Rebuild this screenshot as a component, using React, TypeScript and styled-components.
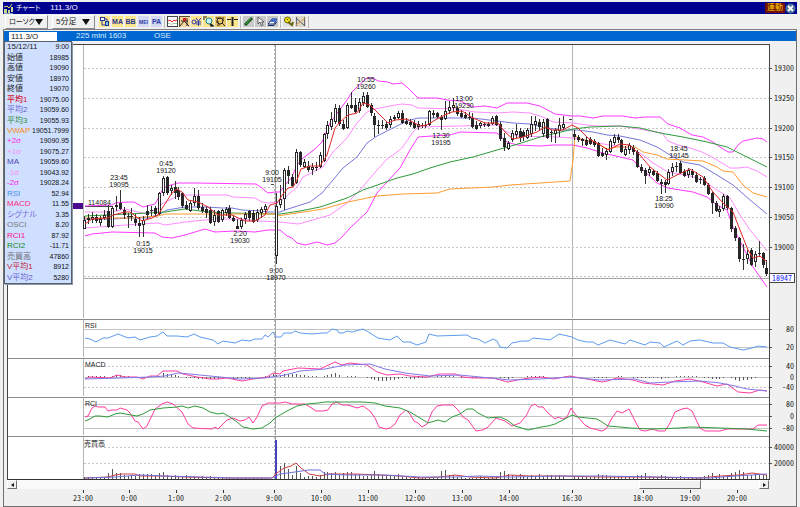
import React from "react";
import styled, { createGlobalStyle } from "styled-components";

const GlobalStyle = createGlobalStyle`
  * { box-sizing: border-box; }
  body {
    margin: 0;
    background: #f0f0f0;
    font-family: "Liberation Sans", "Noto Sans CJK JP", sans-serif;
    font-size: 8px;
    line-height: 10px;
    color: #222;
  }
  button, input, select { font: inherit; color: inherit; margin: 0; }
`;

/* ---------- chart data ---------- */

type Candle = [high: number, top: number, bottom: number, low: number, up: 0 | 1];

const candles: Record<number, Candle> = {
  0: [216, 220, 229, 229, 1], 1: [214, 218, 220, 224, 1], 2: [212, 217, 220, 223, 1],
  3: [214, 217, 221, 223, 0], 4: [216, 219, 223, 226, 1], 5: [210, 215, 218, 220, 1],
  6: [205, 211, 227, 228, 0], 7: [206, 208, 227, 228, 1], 8: [196, 205, 207, 211, 1],
  9: [190, 203, 209, 210, 0], 10: [207, 210, 215, 219, 0], 11: [213, 216, 217, 228, 0],
  12: [208, 216, 217, 221, 0], 13: [214, 219, 223, 226, 0], 14: [217, 223, 226, 237, 0],
  15: [216, 220, 225, 237, 1], 16: [205, 211, 215, 219, 0], 17: [206, 210, 211, 216, 1],
  18: [206, 208, 214, 217, 0], 19: [192, 193, 214, 215, 1], 20: [176, 178, 193, 196, 1],
  21: [176, 177, 193, 195, 0], 22: [185, 188, 191, 195, 1], 23: [181, 187, 193, 199, 0],
  24: [187, 190, 197, 200, 0], 25: [192, 193, 206, 208, 0], 26: [201, 205, 209, 210, 0],
  27: [200, 203, 211, 212, 1], 28: [188, 196, 203, 206, 1], 29: [190, 196, 208, 210, 0],
  30: [203, 207, 211, 213, 0], 31: [207, 209, 213, 218, 0], 32: [207, 210, 223, 224, 0],
  33: [210, 215, 222, 226, 1], 34: [210, 211, 222, 223, 0], 35: [209, 210, 220, 222, 1],
  36: [207, 209, 213, 216, 1], 37: [205, 208, 218, 219, 0], 38: [215, 218, 221, 222, 0],
  39: [219, 226, 229, 229, 0], 40: [218, 220, 227, 229, 1], 41: [212, 214, 219, 224, 1],
  42: [210, 211, 218, 221, 0], 43: [210, 213, 222, 223, 0], 44: [209, 212, 220, 222, 1],
  45: [207, 209, 213, 218, 1], 46: [204, 206, 210, 214, 1],
  49: [193, 206, 256, 264, 1], 50: [185, 199, 205, 208, 1], 51: [168, 170, 199, 210, 1],
  52: [166, 170, 176, 184, 0], 53: [174, 177, 186, 187, 0], 54: [149, 152, 183, 184, 1],
  55: [151, 152, 165, 167, 0], 56: [159, 162, 167, 168, 1], 57: [161, 166, 170, 172, 0],
  58: [163, 167, 170, 175, 1], 59: [162, 167, 168, 171, 0], 60: [152, 155, 167, 168, 1],
  61: [133, 134, 161, 162, 1], 62: [121, 125, 134, 139, 1], 63: [112, 119, 127, 130, 1],
  64: [104, 108, 122, 124, 1], 65: [105, 108, 124, 126, 0], 66: [120, 124, 129, 130, 0],
  67: [103, 105, 128, 129, 1], 68: [92, 105, 108, 109, 0], 69: [98, 105, 112, 113, 0],
  70: [98, 102, 111, 113, 1], 71: [92, 96, 103, 106, 1], 72: [92, 95, 107, 108, 0],
  73: [103, 105, 113, 116, 0], 74: [113, 116, 125, 137, 0], 75: [120, 125, 126, 134, 0],
  76: [120, 125, 126, 129, 0], 77: [121, 124, 128, 130, 0], 78: [116, 119, 125, 128, 1],
  79: [115, 117, 119, 121, 1], 80: [111, 113, 118, 119, 1], 81: [110, 113, 123, 124, 0],
  82: [118, 121, 124, 125, 0], 83: [119, 122, 125, 127, 0], 84: [120, 123, 128, 129, 0],
  85: [121, 124, 127, 130, 1], 86: [123, 125, 126, 128, 0], 87: [121, 125, 126, 128, 0],
  88: [110, 111, 125, 126, 1], 89: [110, 113, 115, 118, 0], 90: [112, 113, 117, 119, 0],
  91: [115, 117, 120, 130, 0], 92: [101, 111, 119, 120, 1], 93: [101, 107, 111, 114, 1],
  94: [98, 105, 108, 112, 1], 95: [106, 108, 114, 116, 0], 96: [110, 113, 117, 118, 0],
  97: [112, 115, 118, 119, 0], 98: [112, 117, 118, 120, 0], 99: [113, 118, 127, 128, 0],
  100: [121, 125, 129, 130, 0], 101: [122, 123, 126, 128, 1], 102: [122, 124, 125, 127, 0],
  103: [122, 124, 126, 127, 1], 104: [116, 118, 124, 125, 1], 105: [115, 116, 125, 126, 0],
  106: [122, 124, 139, 141, 0], 107: [133, 138, 147, 151, 0], 108: [141, 143, 149, 150, 1],
  109: [130, 133, 140, 142, 1], 110: [124, 131, 135, 138, 1], 111: [128, 131, 138, 142, 0],
  112: [130, 132, 137, 141, 0], 113: [128, 130, 138, 139, 1], 114: [116, 124, 134, 137, 1],
  115: [116, 121, 125, 131, 1], 116: [119, 122, 127, 131, 0], 117: [119, 122, 134, 137, 1],
  118: [118, 119, 138, 139, 0], 119: [130, 132, 133, 142, 0], 120: [128, 130, 134, 143, 1],
  121: [118, 125, 131, 137, 1], 122: [116, 124, 128, 130, 1],
  125: [130, 134, 137, 140, 0], 126: [135, 137, 140, 142, 0], 127: [138, 139, 141, 146, 0],
  128: [137, 140, 145, 146, 0], 129: [137, 139, 144, 145, 0], 130: [139, 141, 145, 147, 0],
  131: [142, 143, 156, 157, 0], 132: [148, 153, 156, 157, 0], 133: [148, 151, 155, 160, 1],
  134: [139, 141, 152, 153, 1], 135: [134, 137, 143, 145, 1], 136: [134, 137, 140, 143, 0],
  137: [139, 140, 152, 153, 0], 138: [146, 149, 155, 156, 1], 139: [143, 145, 150, 154, 1],
  140: [145, 148, 152, 155, 0], 141: [150, 152, 167, 168, 0], 142: [164, 167, 171, 173, 0],
  143: [168, 170, 176, 184, 0], 144: [167, 169, 173, 176, 1], 145: [169, 171, 175, 176, 0],
  146: [171, 173, 181, 182, 0], 147: [179, 182, 184, 194, 0], 148: [180, 182, 185, 193, 0],
  149: [169, 172, 184, 185, 1], 150: [163, 167, 172, 176, 1], 151: [162, 166, 167, 172, 1],
  152: [161, 163, 173, 174, 0], 153: [169, 171, 176, 177, 0], 154: [168, 170, 175, 178, 1],
  155: [169, 171, 175, 178, 0], 156: [172, 175, 182, 183, 0], 157: [177, 179, 180, 184, 0],
  158: [176, 178, 185, 186, 0], 159: [183, 185, 194, 195, 0], 160: [192, 193, 203, 214, 0],
  161: [201, 203, 211, 212, 0], 162: [206, 209, 212, 217, 1], 163: [194, 196, 209, 211, 1],
  164: [195, 196, 208, 210, 0], 165: [207, 208, 229, 232, 0], 166: [226, 228, 238, 241, 0],
  167: [237, 238, 259, 262, 0], 168: [244, 259, 260, 270, 0], 169: [250, 254, 259, 264, 1],
  170: [248, 250, 265, 266, 0], 171: [251, 254, 262, 267, 1], 172: [241, 253, 254, 257, 1],
  173: [252, 253, 265, 268, 0], 174: [260, 268, 274, 276, 0],
};

const BAR_COUNT = 175;
const barX = (i: number) => Math.round(84.4 + 3.92 * i);

const overlays: { color: string; points: string }[] = [
  { color: "#ff8cff", points: "85,212 112,212 125,209 147,214 158,208 163,203 172,199 178,195 227,195 233,197 255,198 262,202 268,203 280,202 290,193 297,187 303,177 323,167 333,152 347,138 357,123 367,112 375,109 390,106 402,104 412,105 418,108 457,109 475,112 497,113 513,112 530,113 543,117 553,122 573,123 587,125 597,126 620,126 633,128 650,131 662,133 668,141 678,145 690,148 702,152 712,157 722,163 730,168 738,168 747,167 757,171 767,177" },
  { color: "#ff8cff", points: "85,228 112,226 140,224 158,223 165,225 185,222 215,219 240,219 260,221 280,222 298,224 313,220 330,215 347,203 360,190 377,170 387,159 393,155 402,148 413,132 418,127 460,126 497,125 505,131 517,136 557,137 573,138 597,143 630,148 640,153 653,163 668,172 690,176 703,180 717,190 730,198 740,215 750,230 760,242 767,251" },
  { color: "#ff38ff", points: "85,206 112,205 115,203 128,202 134,202 143,207 155,204 159,197 163,188 171,185 178,183 195,183 256,184 262,188 268,193 275,192 280,192 285,185 292,177 297,165 303,158 315,149 322,142 330,123 338,112 347,100 352,92 357,87 367,78 373,78 378,81 388,82 393,84 402,83 408,88 418,98 437,98 447,100 460,101 473,107 485,106 497,108 507,103 527,103 540,106 555,114 572,116 580,116 593,118 603,116 623,116 635,118 645,117 660,117 668,124 680,128 692,135 703,137 713,142 720,147 728,152 733,152 738,145 743,141 757,138 763,139 767,142" },
  { color: "#ff38ff", points: "85,236 92,234 112,232 155,233 162,237 172,238 185,235 205,229 215,232 235,231 255,232 268,230 280,230 287,236 292,238 297,243 305,245 317,242 327,245 335,243 342,237 350,228 367,212 377,193 387,182 400,168 410,150 418,137 432,136 450,135 460,132 497,133 507,142 517,145 540,146 553,145 573,145 587,148 603,153 633,160 640,167 657,183 668,188 693,192 707,197 717,205 727,210 733,227 743,247 753,267 767,287" },
  { color: "#7676dc", points: "85,219 113,219 128,218 147,218 158,215 167,210 185,207 208,207 222,208 232,208 242,210 262,211 268,212 280,212 288,209 310,202 322,193 333,180 343,168 357,157 367,143 377,136 393,128 407,121 418,118 473,118 497,121 513,123 530,124 547,128 563,130 577,130 593,132 607,135 620,136 640,140 657,147 670,155 683,162 700,165 717,175 733,185 750,200 767,214" },
  { color: "#2f9a3a", points: "85,216 128,214 165,212 185,209 208,212 232,213 275,214 280,214 300,211 320,207 347,198 363,190 383,183 397,178 413,174 430,168 450,162 473,157 497,150 518,144 540,137 557,133 573,129 590,127 620,126 640,128 660,133 683,137 707,142 727,147 743,155 767,167" },
  { color: "#ff9c30", points: "85,218 130,218 158,216 165,214 275,214 277,216 310,211 323,209 348,202 377,196 403,194 437,193 450,189 493,187 510,185 540,183 570,181 573,160 575,135 578,138 597,143 607,149 618,147 635,147 643,152 657,155 667,159 703,161 717,167 723,171 733,172 743,185 753,193 767,197" },
];

const redAverage =
  "85,224 92,219 108,218 113,215 125,212 130,212 142,221 152,218 158,215 163,207 172,193 177,189 182,192 188,200 198,202 208,207 218,215 232,215 245,221 255,221 265,215 270,205 277,203 283,194 288,188 293,187 297,180 301,169 310,166 320,166 327,155 335,128 340,122 348,115 357,113 363,103 370,105 377,112 388,123 395,120 407,119 420,126 427,125 437,119 447,114 452,112 462,111 473,118 485,123 498,123 505,132 513,139 523,137 537,132 545,127 552,130 563,130 572,125 578,128 588,138 600,145 608,150 620,144 630,145 640,155 650,167 667,180 677,175 690,169 703,177 713,192 723,203 733,212 740,230 748,250 753,258 760,256 767,262";

const rsi =
  "85,338 90,339 96,342 103,338 108,338 118,334 128,338 135,337 140,340 150,337 157,336 163,332 167,336 177,336 187,337 194,334 200,337 213,340 218,344 223,341 235,343 242,340 250,341 255,339 262,339 265,335 268,337 273,332 276,337 281,337 284,333 292,333 295,331 300,333 312,334 322,333 327,333 332,329 337,330 339,333 343,333 347,331 352,332 363,329 370,333 378,338 390,340 397,336 403,342 410,342 417,345 426,342 429,334 437,336 467,335 472,338 478,339 485,343 493,339 497,341 500,347 507,348 512,343 522,341 529,341 533,338 543,339 550,340 559,334 572,337 578,340 587,342 593,342 598,345 610,340 625,344 630,340 645,345 650,342 660,343 664,347 677,341 683,345 690,341 700,340 713,343 723,343 730,347 743,350 752,348 758,346 767,347";

const macd =
  "85,379 90,377 110,378 117,375 125,377 137,377 143,379 150,376 157,376 163,371 177,371 183,374 197,377 210,379 218,379 227,378 242,381 253,379 267,377 273,373 280,374 283,371 293,369 298,368 320,369 335,362 342,365 350,363 367,365 377,372 387,375 400,374 410,376 427,377 440,374 455,374 463,377 473,378 493,378 508,382 517,380 530,378 542,377 553,379 570,376 575,377 587,379 602,382 607,381 617,378 633,380 643,383 653,384 663,385 675,381 690,379 703,382 717,386 727,384 738,392 750,393 760,390 767,391";
const macdSignal =
  "85,379 120,378 150,377 165,376 178,373 190,374 210,376 240,379 265,378 285,375 300,371 325,369 345,365 370,364 385,369 405,373 430,376 460,375 480,377 510,380 540,379 570,377 600,380 635,379 650,383 670,382 700,381 720,383 735,386 747,389 767,391";

const rci1 =
  "85,417 88,416 92,408 95,406 98,407 105,407 108,411 112,410 117,410 120,408 127,410 130,413 135,421 138,422 143,429 147,426 155,409 162,404 167,402 173,404 182,412 188,424 193,428 212,429 215,427 218,429 227,420 233,418 240,421 245,420 249,417 253,423 257,417 262,406 268,403 280,403 285,402 292,404 305,404 310,407 316,411 323,411 328,410 332,404 337,402 342,405 348,405 357,408 363,406 370,411 375,418 379,427 386,429 390,428 395,424 400,415 406,410 410,414 414,421 418,423 422,427 427,424 432,412 437,406 443,405 453,405 458,410 463,417 468,420 476,431 483,430 488,427 496,418 505,421 512,426 520,423 526,416 531,406 535,404 538,407 543,407 547,412 555,419 558,417 563,419 567,417 571,408 575,414 585,425 590,428 602,431 606,429 612,418 617,411 622,413 629,409 635,421 640,430 645,431 653,429 658,431 665,431 670,423 675,412 682,409 687,408 692,411 700,428 705,431 720,431 727,429 753,429 758,425 767,425";
const rci2 =
  "85,421 90,419 95,416 100,416 108,417 115,414 120,413 137,416 143,414 150,410 157,409 163,408 177,407 182,406 188,408 195,406 203,408 210,412 218,414 223,413 230,417 237,422 243,427 253,429 262,428 270,423 275,418 287,411 297,406 307,404 318,403 325,402 363,402 375,403 385,406 400,408 410,412 420,418 428,423 438,420 445,422 452,417 460,414 467,409 473,409 478,413 488,418 500,417 507,420 515,426 528,430 537,428 541,427 548,426 555,424 563,420 572,415 578,417 597,419 602,422 608,426 620,427 630,428 653,429 680,428 690,427 720,428 747,429 767,431";

const volume = [
  2, 2, 2, 2, 2, 2, 6, 10, 6, 6, 4, 3, 4, 3, 5, 5, 5, 5, 4, 6, 7, 4, 3, 4, 3, 3, 4, 3, 3, 2, 3, 2, 3, 2, 2, 1, 1,
  1, 1, 1, 1, 1, 1, 1, 1, 1, 1, 0, 0, 0, 13, 16, 10, 4, 13, 6, 2, 3, 3, 2, 4, 7, 7, 6, 7, 4, 6, 7, 7, 4, 5, 3, 3, 4,
  8, 5, 4, 3, 4, 3, 5, 2, 2, 1, 1, 2, 1, 1, 1, 2, 1, 8, 9, 4, 4, 2, 2, 1, 1, 1, 1, 3, 2, 1, 2, 2, 7, 8, 5, 4, 3, 5,
  3, 2, 4, 3, 5, 3, 4, 4, 3, 4, 3, 0, 0, 3, 3, 2, 2, 2, 3, 5, 4, 4, 3, 2, 2, 3, 2, 2, 3, 4, 4, 6, 3, 2, 2, 4, 3, 2,
  1, 2, 3, 2, 2, 1, 1, 2, 3, 4, 6, 3, 5, 3, 4, 6, 7, 9, 7, 4, 4, 5, 5, 4, 4,
];
const volumeRed =
  "85,478 108,477 115,475 122,474 135,474 140,476 160,476 185,477 230,478 272,478 277,473 284,468 291,466 296,463 301,468 309,474 320,476 330,474 355,474 380,475 400,476 420,478 440,477 455,475 470,477 495,478 510,475 530,476 560,476 600,477 640,477 700,478 720,476 740,475 752,473 767,475";
const volumeBlue =
  "85,478 115,477 140,475 165,476 200,477 235,478 272,478 280,474 295,472 308,470 320,470 325,474 345,475 385,475 420,477 455,477 480,476 510,477 560,476 600,476 660,477 710,478 735,476 752,475 767,474";

const interpolate = (points: string) => {
  const parsed = points.split(" ").map((p) => p.split(",").map(Number));
  return (x: number) => {
    for (let i = 1; i < parsed.length; i++) {
      const [x0, y0] = parsed[i - 1];
      const [x1, y1] = parsed[i];
      if (x <= x1) return y0 + ((y1 - y0) * (x - x0)) / (x1 - x0);
    }
    return parsed[parsed.length - 1][1];
  };
};
const macdAt = interpolate(macd);
const signalAt = interpolate(macdSignal);

const priceTicks = [
  { y: 68, label: "19300" }, { y: 98, label: "19250" }, { y: 128, label: "19200" },
  { y: 157, label: "19150" }, { y: 187, label: "19100" }, { y: 217, label: "19050" },
  { y: 247, label: "19000" }, { y: 276, label: "" },
];

const notes = [
  { x: 119, y: 180, time: "23:45", price: "19095" },
  { x: 166, y: 166, time: "0:45", price: "19120" },
  { x: 143, y: 246, time: "0:15", price: "19015" },
  { x: 240, y: 236, time: "2:20", price: "19030" },
  { x: 272, y: 175, time: "9:00", price: "19105" },
  { x: 276, y: 273, time: "9:00", price: "18970" },
  { x: 366, y: 82, time: "10:55", price: "19260" },
  { x: 464, y: 101, time: "13:00", price: "19230" },
  { x: 441, y: 138, time: "12:30", price: "19195" },
  { x: 679, y: 151, time: "18:45", price: "19145" },
  { x: 664, y: 201, time: "18:25", price: "19090" },
];

const times = [
  { x: 83, label: "23:00" }, { x: 129, label: "0:00" }, { x: 176, label: "1:00" },
  { x: 223, label: "2:00" }, { x: 274, label: "9:00" }, { x: 321, label: "10:00" },
  { x: 368, label: "11:00" }, { x: 415, label: "12:00" }, { x: 462, label: "13:00" },
  { x: 509, label: "14:00" }, { x: 572, label: "16:30" }, { x: 643, label: "18:00" },
  { x: 690, label: "19:00" }, { x: 737, label: "20:00" },
];

const readings: { label: string; value: string; color?: string; bold?: boolean }[] = [
  { label: "15/12/11", value: "9:00" },
  { label: "始値", value: "18985" },
  { label: "高値", value: "19090" },
  { label: "安値", value: "18970" },
  { label: "終値", value: "19070" },
  { label: "平均1", value: "19075.00", color: "#d8102c", bold: true },
  { label: "平均2", value: "19059.60", color: "#6b62d0" },
  { label: "平均3", value: "19055.93", color: "#2b8f3c" },
  { label: "VWAP", value: "19051.7999", color: "#f58a20" },
  { label: "+2σ", value: "19090.95", color: "#ff1cf0", bold: true },
  { label: "+1σ", value: "19075.27", color: "#f98cf5" },
  { label: "MA", value: "19059.60", color: "#4f48b0" },
  { label: "-1σ", value: "19043.92", color: "#f98cf5" },
  { label: "-2σ", value: "19028.24", color: "#ff1cf0", bold: true },
  { label: "RSI", value: "52.94", color: "#4a90e8" },
  { label: "MACD", value: "11.55", color: "#ff2a80" },
  { label: "シグナル", value: "3.35", color: "#7a70e0" },
  { label: "OSCI", value: "8.20", color: "#777777" },
  { label: "RCI1", value: "87.92", color: "#ff1080", bold: true },
  { label: "RCI2", value: "-11.71", color: "#0f8a20", bold: true },
  { label: "売買高", value: "47860", color: "#6f6f78" },
  { label: "V平均1", value: "8912", color: "#c02434" },
  { label: "V平均2", value: "5280", color: "#6b62d0" },
];

/* ---------- styled parts ---------- */

const Window = styled.main`
  display: flex;
  flex-direction: column;
  padding: 2px 3px 0;
  background: #f0f0f0;
`;

const TitleBar = styled.header`
  display: flex;
  align-items: center;
  height: 12px;
  padding: 0 1px 0 0;
  background: #000090;
  color: #f4f4ff;
`;

const TitleText = styled.h1`
  flex: 1;
  display: flex;
  gap: 10px;
  margin: 0 0 0 2px;
  font-size: 8px;
  font-weight: 400;
`;

const Kana = styled.span`
  font-size: 7px;
  font-feature-settings: "palt";
`;

const LinkButton = styled.button`
  height: 10px;
  padding: 0 2px;
  border: 0;
  background: #701008;
  color: #ffd400;
  line-height: 10px;
`;

const IconButton = styled.button<{ $bg?: string }>`
  display: block;
  flex: none;
  width: 11px;
  height: 11px;
  padding: 0;
  border: 0;
  background: ${(p) => p.$bg ?? "transparent"};

  svg { display: block; }
`;

const Toolbar = styled.div`
  display: flex;
  align-items: center;
  gap: 2px;
  height: 16px;
  padding: 0 2px;
  border-bottom: 1px solid #808080;
`;

const Picker = styled.label<{ $width: number }>`
  display: grid;
  grid-template-columns: 1fr 8px;
  align-items: center;
  width: ${(p) => p.$width}px;
  height: 14px;
  margin-right: 2px;
  padding: 0 4px 0 3px;
  border: 1px solid;
  border-color: #ffffff #8a8a8a #8a8a8a #ffffff;

  svg { grid-area: 1 / 2; pointer-events: none; }
`;

const PickerSelect = styled.select<{ $kana?: boolean }>`
  grid-area: 1 / 1 / 2 / 3;
  appearance: none;
  width: 100%;
  height: 12px;
  padding: 0;
  border: 0;
  background: transparent;
  font-size: ${(p) => (p.$kana ? 7 : 8)}px;
  font-feature-settings: "palt";
`;

const IconGroup = styled.div<{ $gap: number }>`
  display: flex;
  gap: ${(p) => p.$gap}px;
`;

const Divider = styled.span`
  width: 1px;
  height: 12px;
  background: #b8b8b8;
`;

const Frame = styled.section`
  position: relative;
  padding: 1px 0 0 3px;
  border: 1px solid #6e6e6e;
  border-top: 0;
`;

const SymbolBar = styled.div`
  display: flex;
  align-items: center;
  height: 10px;
  margin: 0 0 3px -3px;
  padding-left: 5px;
  background: #0066d0;
  color: #d8ecff;
`;

const SymbolInput = styled.input`
  width: 48px;
  height: 9px;
  padding: 0 2px;
  border: 0;
  background: #ffffff;
  color: #202020;
  line-height: 9px;
`;

const SymbolName = styled.span`
  width: 78px;
  margin-left: 19px;
`;

const Readout = styled.table`
  position: absolute;
  top: 11px;
  left: 0;
  width: 68px;
  height: 243px;
  table-layout: fixed;
  border: 1px solid #56606e;
  border-spacing: 0;
  background: #cfdfff;
  box-shadow: 1px 1px 0 #8c97a8;
`;

const ReadoutLabel = styled.th<{ $color?: string; $bold?: boolean }>`
  width: 26px;
  padding: 0 0 0 2px;
  color: ${(p) => p.$color ?? "#222"};
  font-weight: ${(p) => (p.$bold ? 500 : 400)};
  font-feature-settings: "palt";
  line-height: 8px;
  text-align: left;
  white-space: nowrap;
`;

const ReadoutValue = styled.td`
  padding: 0 2px 0 0;
  color: #111;
  font-size: 7px;
  line-height: 8px;
  text-align: right;
`;

const Pane = styled.svg`
  display: block;
  width: 100%;
  height: auto;
  font-family: "Liberation Sans", "Noto Sans CJK JP", sans-serif;
  font-size: 7px;
  fill: #222;
`;

const Figure = styled.text`
  font-family: "Noto Sans CJK JP", sans-serif;
  font-size: 8px;
  font-feature-settings: "hwid";
`;

const ScrollBar = styled.div`
  display: flex;
  height: 9px;
  margin: 0 27px 1px 0;
  background: #fafafa;
`;

const ScrollArrow = styled.button`
  display: flex;
  align-items: center;
  justify-content: center;
  width: 10px;
  padding: 0;
  border: 1px solid;
  border-color: #ffffff #707070 #707070 #ffffff;
  background: #f0f0f0;
`;

const ScrollTrack = styled.div`
  flex: 1;
  display: grid;
  grid-template-columns: 621fr 62fr 58fr;
`;

const ScrollThumb = styled.div`
  grid-column: 2;
  border: 1px solid;
  border-color: #ffffff #707070 #707070 #ffffff;
  background: #f0f0f0;
`;

/* ---------- chart pieces ---------- */

const Line = ({ points, color }: { points: string; color: string }) => (
  <polyline points={points} fill="none" stroke={color} strokeWidth="1" />
);

const HLine = ({ y, dashed, color = "#c4c4c4" }: { y: number; dashed?: boolean; color?: string }) => (
  <line x1="84" x2="769" y1={y + 0.5} y2={y + 0.5} stroke={color} strokeDasharray={dashed ? "2 2" : undefined} />
);

const AxisLabel = ({ y, label }: { y: number; label: string }) => (
  <>
    <line x1="770" x2="772" y1={y + 0.5} y2={y + 0.5} stroke="#555" />
    <Figure x="794" y={y + 3} textAnchor="end">{label}</Figure>
  </>
);

const Backdrop = ({ y, height, heavy }: { y: number; height: number; heavy?: boolean }) => (
  <g shapeRendering="crispEdges">
    <rect x="7" y={y} width="763" height={height} fill="#ffffff" />
    <rect x="7" y={y} width="763" height="1" fill={heavy ? "#444444" : "#8a8a8a"} />
    <rect x="7" y={y} width="1" height={height} fill="#444444" />
    <rect x="83" y={y + 1} width="1" height={height - 2} fill="#b4b4b4" />
    <rect x="572" y={y + 1} width="1" height={height - 2} fill="#b4b4b4" />
    <line x1="274.5" x2="274.5" y1={y + 1} y2={y + height - 1} stroke="#bdbdbd" strokeDasharray="2 2" />
    <rect x="275" y={y + 1} width="1" height={height - 2} fill="#a4a4a4" />
    <rect x="769" y={y} width="1" height={height} fill="#444444" />
  </g>
);

const PricePane = () => (
  <Pane viewBox="7 44 789 275" role="img" aria-label="Price">
    <Backdrop y={44} height={275} heavy />
    <g shapeRendering="crispEdges">
      {priceTicks.map((t) => <HLine key={t.y} y={t.y} dashed />)}
      <HLine y={278} color="#a4a4a4" />
      <rect x="73" y="203" width="10" height="6" fill="#4b0a8c" />
      <rect x="85" y="206" width="27" height="1" fill="#444" />
      <rect x="271" y="184" width="3" height="1" fill="#444" />
      <rect x="569" y="119" width="3" height="1" fill="#444" />
    </g>
    {overlays.map((o) => <Line key={o.points} {...o} />)}
    <g shapeRendering="crispEdges">
      {Object.entries(candles).map(([i, [high, top, bottom, low, up]]) => {
        const x = barX(Number(i));
        return (
          <g key={i}>
            <rect x={x} y={high} width="1" height={low - high} fill="#333" />
            <rect x={x - 1} y={top} width="3" height={Math.max(bottom - top, 1)} fill="#262626" />
            {up === 1 && bottom - top > 2 && (
              <rect x={x} y={top + 1} width="1" height={bottom - top - 2} fill="#fff" />
            )}
          </g>
        );
      })}
    </g>
    <Line points={redAverage} color="#e02828" />
    <text x="88" y="205">114084</text>
    {notes.map((n) => (
      <text key={n.time + n.price} textAnchor="middle" fill="#111">
        <tspan x={n.x} y={n.y}>{n.time}</tspan>
        <tspan x={n.x} y={n.y + 7}>{n.price}</tspan>
      </text>
    ))}
    {priceTicks.filter((t) => t.label).map((t) => <AxisLabel key={t.y} {...t} />)}
    <rect x="769.5" y="273.5" width="25" height="9" fill="#fff" stroke="#444" />
    <Figure x="792" y="281" textAnchor="end" fill="#1a1aff">18947</Figure>
  </Pane>
);

const RsiPane = () => (
  <Pane viewBox="7 319 789 39" role="img" aria-label="RSI">
    <Backdrop y={319} height={39} />
    <g shapeRendering="crispEdges"><HLine y={329} /><HLine y={347} /></g>
    <Line points={rsi} color="#5c9cf0" />
    <text x="85" y="328">RSI</text>
    <AxisLabel y={329} label="80" />
    <AxisLabel y={347} label="20" />
  </Pane>
);

const MacdPane = () => (
  <Pane viewBox="7 358 789 39" role="img" aria-label="MACD">
    <Backdrop y={358} height={39} />
    <g shapeRendering="crispEdges">
      <HLine y={366} dashed /><HLine y={377} /><HLine y={387} dashed />
      {Array.from({ length: BAR_COUNT }, (_, i) => {
        const x = barX(i);
        const h = Math.round((signalAt(x) - macdAt(x)) * 0.7);
        return <rect key={i} x={x} y={h > 0 ? 377 - h : 377} width="1" height={Math.abs(h)} fill="#555" />;
      })}
    </g>
    <Line points={macd} color="#ff3c9c" />
    <Line points={macdSignal} color="#8078e8" />
    <text x="85" y="367">MACD</text>
    <AxisLabel y={366} label="40" />
    <AxisLabel y={377} label="0" />
    <AxisLabel y={387} label="-40" />
  </Pane>
);

const RciPane = () => (
  <Pane viewBox="7 397 789 39" role="img" aria-label="RCI">
    <Backdrop y={397} height={39} />
    <g shapeRendering="crispEdges"><HLine y={404} /><HLine y={416} /><HLine y={428} /></g>
    <Line points={rci1} color="#ff3c9c" />
    <Line points={rci2} color="#2f9a3a" />
    <text x="85" y="406">RCI</text>
    <AxisLabel y={404} label="80" />
    <AxisLabel y={416} label="0" />
    <AxisLabel y={428} label="-80" />
  </Pane>
);

const VolumePane = () => (
  <Pane viewBox="7 436 789 44" role="img" aria-label="売買高">
    <Backdrop y={436} height={44} />
    <g shapeRendering="crispEdges">
      <HLine y={447} dashed /><HLine y={463} dashed />
      {volume.map((h, i) => <rect key={i} x={barX(i)} y={479 - h} width="1" height={h} fill="#555" />)}
      <rect x="275" y="440" width="2" height="39" fill="#4444b8" />
      <rect x="7" y="479" width="763" height="1" fill="#333" />
    </g>
    <Line points={volumeRed} color="#d04040" />
    <Line points={volumeBlue} color="#7070dc" />
    <text x="84" y="446">売買高</text>
    <AxisLabel y={447} label="40000" />
    <AxisLabel y={463} label="20000" />
  </Pane>
);

const TimeAxis = () => (
  <Pane viewBox="7 490 789 16" role="img" aria-label="Time">
    {times.map((t) => (
      <g key={t.label}>
        <rect x={t.x} y="490" width="1" height="3" fill="#333" />
        <Figure x={t.x} y="501" textAnchor="middle">{t.label}</Figure>
      </g>
    ))}
  </Pane>
);

/* ---------- icons ---------- */

const Glyph = ({ children }: { children: React.ReactNode }) => (
  <svg width="11" height="11" viewBox="0 0 11 11" fill="none" aria-hidden="true">{children}</svg>
);

const Arrow = () => (
  <svg width="8" height="6" viewBox="0 0 8 6" aria-hidden="true"><path d="M0 0h8L4 6z" fill="#111" /></svg>
);

const TagGlyph = ({ text, color }: { text: string; color: string }) => (
  <Glyph>
    <text x="5.5" y="8" textAnchor="middle" fontSize={text.length > 2 ? 5 : 7} fontWeight="700" fill={color}>{text}</text>
  </Glyph>
);

type Tool = { name: string; bg?: string; icon: React.ReactNode };

const YELLOW = "#fbe68e";

const indicatorTools: Tool[] = [
  { name: "Layout", bg: YELLOW, icon: (
    <Glyph>
      <rect x="1.5" y="1.5" width="4" height="3" fill="#fff" stroke="#2438a0" />
      <path d="M3 5v4h3M5 3h3v2" stroke="#2438a0" />
      <rect x="6.5" y="5.5" width="3" height="4" fill="#7ac0e8" stroke="#2438a0" />
    </Glyph>
  ) },
  { name: "Moving average", bg: YELLOW, icon: <TagGlyph text="MA" color="#283890" /> },
  { name: "Bollinger bands", bg: YELLOW, icon: <TagGlyph text="BB" color="#283890" /> },
  { name: "MEI", bg: "#d4d8f0", icon: <TagGlyph text="MEI" color="#2a3ca8" /> },
  { name: "PA", bg: "#d4d8f0", icon: <TagGlyph text="PA" color="#2a3ca8" /> },
];

const chartTools: Tool[] = [
  { name: "Line chart", bg: "#fff", icon: (
    <Glyph>
      <rect x=".5" y=".5" width="10" height="10" stroke="#444" />
      <path d="M1 5l2-1 2 2 2-2 1 1 2-1" stroke="#e02020" />
      <path d="M1 7.5h2l1 1 2-1h4" stroke="#a8c8a8" />
    </Glyph>
  ) },
  { name: "Grid", bg: "#f2d79c", icon: (
    <Glyph>
      <path d="M0 .5h11M.5 0v11" stroke="#5a4a30" />
      <path d="M1 10l4-5 5 5M2 5h7M8 2v8" stroke="#3a2a20" />
      <rect x="4" y="2" width="3" height="3" fill="#d02020" />
    </Glyph>
  ) },
  { name: "Price", bg: YELLOW, icon: (
    <Glyph>
      <circle cx="3" cy="6" r="2" stroke="#3038b0" />
      <path d="M5 2l2.5 3L10 2M7.5 5v5M5 6h5M5 8h5" stroke="#3038b0" />
    </Glyph>
  ) },
  { name: "Refresh", bg: YELLOW, icon: (
    <Glyph>
      <path d="M0 1h4M0 3h2M7 10h4" stroke="#222" />
      <circle cx="6" cy="5" r="3" fill="#c8f4f8" stroke="#208090" />
      <path d="M7 8l3 2" stroke="#222" strokeWidth="2" />
    </Glyph>
  ) },
  { name: "Pattern", bg: "#e8c868", icon: (
    <Glyph>
      <circle cx="5" cy="5" r="3" stroke="#222" />
      <path d="M1 2h5M8 1v4M2 9h3M7 7l3 3M1 6h3" stroke="#3a3018" />
    </Glyph>
  ) },
  { name: "Crosshair", bg: YELLOW, icon: (
    <Glyph>
      <path d="M0 3.5h4M7 3.5h4" stroke="#222" />
      <path d="M5.5 1v9" stroke="#222" strokeWidth="2" />
    </Glyph>
  ) },
];

const drawTools: Tool[] = [
  { name: "Pencil", bg: "#c8c8c8", icon: (
    <Glyph>
      <path d="M2 9L9 2" stroke="#185820" strokeWidth="3" />
      <path d="M3 8L9 1" stroke="#58b848" />
    </Glyph>
  ) },
  { name: "Select", bg: "#c8c8c8", icon: (
    <Glyph><path d="M3 1v7l2-2 1.5 4 1.5-1-1.5-3H9z" fill="#fff" stroke="#444" strokeWidth=".8" /></Glyph>
  ) },
  { name: "Eraser", bg: "#c8c8c8", icon: (
    <Glyph>
      <path d="M1 8l4-5h5L7 8z" fill="#fff" stroke="#203070" />
      <path d="M3 6l2-3h5L8 6z" fill="#3c70d8" />
      <path d="M1 9.5h6l3-4" stroke="#203070" />
    </Glyph>
  ) },
];

const extraTools: Tool[] = [
  { name: "Key", bg: "#e0e0e0", icon: (
    <Glyph>
      <circle cx="4.5" cy="4" r="3" fill="#f0e010" stroke="#6a6210" />
      <path d="M5 6l4 3 1-3" stroke="#6a6210" strokeWidth="2" />
      <rect x="4" y="3" width="1" height="1" fill="#333" />
    </Glyph>
  ) },
  { name: "Trend line", bg: "#dcd8c8", icon: (
    <Glyph>
      <path d="M1.5 1v9M9.5 1v9" stroke="#667" />
      <path d="M1 2l9 8" stroke="#556" />
      <path d="M1 9l9-7" stroke="#d89838" />
    </Glyph>
  ) },
];

const Tools = ({ items, gap }: { items: Tool[]; gap: number }) => (
  <IconGroup $gap={gap}>
    {items.map((t) => (
      <IconButton key={t.name} type="button" aria-label={t.name} $bg={t.bg}>{t.icon}</IconButton>
    ))}
  </IconGroup>
);

export default function App() {
  return (
    <>
      <GlobalStyle />
      <Window>
        <TitleBar>
          <svg width="11" height="11" viewBox="0 0 11 11" fill="none" aria-hidden="true">
            <path d="M1 4l3-1 2 2 3-4" stroke="#f0e060" />
            <path d="M1 6h3v4H1zM5 7h2v3H5zM8 4h2v5H8z" fill="#c8d890" />
            <path d="M1 10.5h9" stroke="#88a0c8" />
          </svg>
          <TitleText><Kana>チャート</Kana><span>111.3/O</span></TitleText>
          <LinkButton type="button">連動</LinkButton>
          <IconButton type="button" aria-label="Close">
            <Glyph>
              <circle cx="5.5" cy="5.5" r="5" fill="#4a7098" />
              <path d="M3 3l5 5M8 3L3 8" stroke="#fff" strokeWidth="1.8" />
            </Glyph>
          </IconButton>
        </TitleBar>
        <Toolbar>
          <Picker $width={43}>
            <PickerSelect aria-label="Chart type" $kana><option>ローソク</option></PickerSelect>
            <Arrow />
          </Picker>
          <Picker $width={43}>
            <PickerSelect aria-label="Interval"><option>5分足</option></PickerSelect>
            <Arrow />
          </Picker>
          <Tools items={indicatorTools} gap={2} />
          <Divider />
          <Tools items={chartTools} gap={1} />
          <Divider />
          <Tools items={drawTools} gap={1} />
          <Divider />
          <Tools items={extraTools} gap={1} />
          <Divider />
        </Toolbar>
        <Frame>
          <SymbolBar>
            <SymbolInput aria-label="Symbol" defaultValue="111.3/O" />
            <SymbolName>225 mini 1603</SymbolName>
            <span>OSE</span>
          </SymbolBar>
          <PricePane />
          <RsiPane />
          <MacdPane />
          <RciPane />
          <VolumePane />
          <ScrollBar>
            <ScrollArrow type="button" aria-label="Scroll left">
              <svg width="3" height="4" viewBox="0 0 3 4"><path d="M3 0v4L0 2z" fill="#111" /></svg>
            </ScrollArrow>
            <ScrollTrack><ScrollThumb /></ScrollTrack>
            <ScrollArrow type="button" aria-label="Scroll right">
              <svg width="3" height="4" viewBox="0 0 3 4"><path d="M0 0v4l3-2z" fill="#111" /></svg>
            </ScrollArrow>
          </ScrollBar>
          <TimeAxis />
          <Readout>
            <tbody>
              {readings.map((r, i) => (
                <tr key={i}>
                  <ReadoutLabel scope="row" $color={r.color} $bold={r.bold}>{r.label}</ReadoutLabel>
                  <ReadoutValue>{r.value}</ReadoutValue>
                </tr>
              ))}
            </tbody>
          </Readout>
        </Frame>
      </Window>
    </>
  );
}
